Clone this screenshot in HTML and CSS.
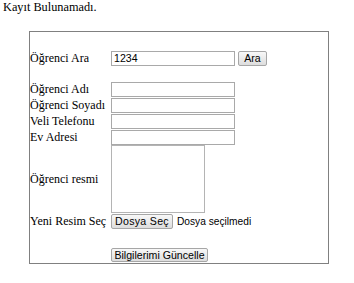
FILE: index.html
```
<html>
<head>
<title>Öğrenci Bilgileri</title>
<link rel="stylesheet" href="styles.css">
</head>
<body>
<p class="status">Kayıt Bulunamadı.</p>
<form class="box" name="frmOgrenci" action="">
  <div class="row">
    <span class="lbl">Öğrenci Ara</span>
    <input type="text" class="txt" name="txtAra" value="1234">
    <button type="button" class="btn btnAra">Ara</button>
  </div>
  <div class="row gap">
    <span class="lbl">Öğrenci Adı</span>
    <input type="text" class="txt" name="txtAd">
  </div>
  <div class="row">
    <span class="lbl">Öğrenci Soyadı</span>
    <input type="text" class="txt" name="txtSoyad">
  </div>
  <div class="row">
    <span class="lbl">Veli Telefonu</span>
    <input type="text" class="txt" name="txtTel">
  </div>
  <div class="row">
    <span class="lbl">Ev Adresi</span>
    <input type="text" class="txt" name="txtAdres">
  </div>
  <div class="row tall">
    <span class="lbl">Öğrenci resmi</span>
    <div class="resim"></div>
  </div>
  <div class="row">
    <span class="lbl">Yeni Resim Seç</span>
    <button type="button" class="btn btnDosya">Dosya Seç</button>
    <span class="dosya">Dosya seçilmedi</span>
  </div>
  <div class="row last">
    <span class="lbl"></span>
    <button type="button" class="btn btnKaydet">Bilgilerimi Güncelle</button>
  </div>
</form>
</body>
</html>
```
FILE: styles.css
```
body { margin: 0; padding: 0 3px; font-family: "Liberation Serif", "Times New Roman", serif; font-size: 12px; color: #000; background: #fff; }
.status { margin: 0; line-height: 15px; font-size: 12.3px; }
.box { display: block; margin: 16px 0 0 26px; width: 298px; border: 1px solid #808080; padding: 18px 0 1px 0; }
.row { display: flex; align-items: center; height: 16px; }
.row.gap { margin-top: 15px; }
.row.tall { height: 68px; }
.row.last { margin-top: 18px; height: 15px; }
.lbl { width: 81px; flex: none; white-space: nowrap; }
.txt { box-sizing: border-box; width: 124px; height: 15px; margin: 0; padding: 0 2px; border: 1px solid #a9a9a9; font-family: "Liberation Sans", Arial, sans-serif; font-size: 10.6px; color: #000; outline: none; }
.resim { box-sizing: border-box; width: 94px; height: 68px; border: 1px solid #b4b4b4; }
.btn { box-sizing: border-box; height: 15px; margin: 0; padding: 0 4px; border: 1px solid #a6a6a6; border-radius: 2px; background: linear-gradient(#f8f8f8, #dddddd); font-family: "Liberation Sans", Arial, sans-serif; font-size: 10.6px; color: #000; line-height: 13px; }
.btnAra { width: 29px; margin-left: 3px; padding: 0; }
.btnDosya { width: 62px; padding: 0; letter-spacing: 0.3px; }
.btnKaydet { width: 97px; height: 14px; padding: 0; line-height: 12px; }
.dosya { margin-left: 4px; font-family: "Liberation Sans", Arial, sans-serif; font-size: 10.2px; }
```
